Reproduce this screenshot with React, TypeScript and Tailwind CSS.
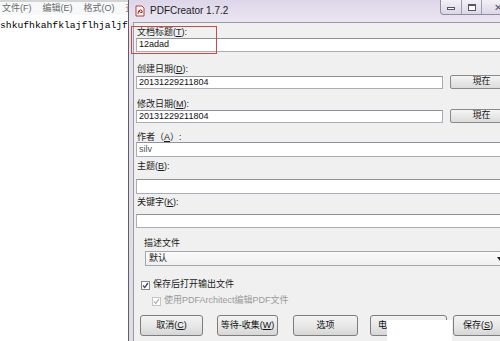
const cjk = "font-['Liberation_Sans','Noto_Sans_CJK_SC',sans-serif]";

function Label({ text, k, className = "" }: { text: string; k: string; className?: string }) {
  return (
    <div className={`h-[10px] whitespace-nowrap pl-[3px] text-[9px] leading-[10px] text-[#1a1a1a] ${className}`}>
      {text}(<u>{k}</u>):
    </div>
  );
}

function Input({ value, h, className = "" }: { value?: string; h: number; className?: string }) {
  return (
    <div
      className={`ml-[2px] flex items-center border border-[#a9adb5] border-t-[#8e939b] bg-white pl-[2px] text-[9px] text-[#111] ${className}`}
      style={{ height: h }}
    >
      {value}
    </div>
  );
}

function NowButton() {
  return (
    <div className="flex h-[14px] flex-1 items-center justify-center rounded-[2px] border border-[#8a8a8a] bg-gradient-to-b from-[#f4f4f4] to-[#dcdcdc] text-[9px] text-[#111]">
      現在
    </div>
  );
}

function Check({ label, disabled }: { label: React.ReactNode; disabled?: boolean }) {
  return (
    <div className={`flex h-[12px] items-center gap-[3px] whitespace-nowrap text-[9px] ${disabled ? "text-[#9a9a9a]" : "text-[#1a1a1a]"}`}>
      <div
        className={`flex h-[9px] w-[9px] items-center justify-center border bg-white ${
          disabled ? "border-[#c4c4c4]" : "border-[#8a8a8a]"
        }`}
      >
        <svg width="7" height="7" viewBox="0 0 7 7">
          <path d="M1 3.5 L2.8 5.5 L6 1" fill="none" stroke={disabled ? "#b5b5b5" : "#3b4a6b"} strokeWidth="1.3" />
        </svg>
      </div>
      {label}
    </div>
  );
}

function Btn({ children, w, className = "" }: { children: React.ReactNode; w: number; className?: string }) {
  return (
    <div
      className={`flex h-[21px] shrink-0 items-center justify-center whitespace-nowrap rounded-[3px] border border-[#7d7d7d] bg-gradient-to-b from-[#f3f3f3] via-[#e8e8e8] to-[#d6d6d6] text-[9px] text-[#111] ${className}`}
      style={{ width: w }}
    >
      {children}
    </div>
  );
}

export default function App() {
  return (
    <div className={`relative flex h-[341px] w-[500px] overflow-hidden bg-white ${cjk}`}>
      {/* notepad behind */}
      <div className="w-[128px] shrink-0 overflow-hidden">
        <div className="flex h-[15px] items-center gap-[11px] whitespace-nowrap border-t-2 border-[#d4d4d4] bg-[#f7f8f9] pl-[2px] text-[9px] text-[#6a6a6a]">
          <span>文件(F)</span>
          <span>编辑(E)</span>
          <span>格式(O)</span>
          <span>查看(V)</span>
        </div>
        <div className="mt-[5px] whitespace-nowrap font-['Liberation_Mono',monospace] text-[9.7px] leading-[12px] text-black">
          shkufhkahfklajflhjaljf
        </div>
      </div>

      {/* PDFCreator dialog */}
      <div className="flex w-[386px] shrink-0 flex-col border-l border-[#5e5d68]">
        <div className="flex h-[22px] shrink-0 items-start bg-gradient-to-b from-[#ddd6ea] to-[#ebe6f2]">
          <svg className="ml-[6px] mt-[5px]" width="10" height="12" viewBox="0 0 10 12">
            <path d="M1 1 H7 L9 3 V11 H1 Z" fill="#fff" stroke="#b23a3a" strokeWidth="1" />
            <path d="M3 9 C3 5 6 4 7 6 C8 8 5 8 4 6" fill="none" stroke="#c62828" strokeWidth="1.1" />
          </svg>
          <span className="ml-[5px] mt-[5px] whitespace-nowrap font-['Liberation_Sans',sans-serif] text-[10px] leading-[12px] text-[#1b1b1b]">
            PDFCreator 1.7.2
          </span>
          <div className="ml-auto flex h-[15px] rounded-b-[4px] border border-t-0 border-[#8f8da0] bg-gradient-to-b from-[#f3f0f7] to-[#dcd7e6]">
            <div className="flex w-[21px] items-center justify-center border-r border-[#9e9cae]">
              <div className="mt-[3px] h-[3px] w-[8px] border border-[#56566a] bg-white" />
            </div>
            <div className="flex w-[20px] items-center justify-center border-r border-[#9e9cae]">
              <div className="h-[7px] w-[8px] border border-t-2 border-[#56566a] bg-white" />
            </div>
            <div className="flex w-[31px] items-center justify-center text-[10px] text-[#56566a]">✕</div>
          </div>
        </div>

        <div className="flex flex-1">
          <div className="w-[4px] shrink-0 bg-gradient-to-b from-[#e7e3ee] to-[#dedbe4]" />
          <div className="flex flex-1 flex-col border-l border-t border-[#9c9aa6] bg-[#f0f0f0] pr-[5px]">
            <Label className="mt-[4px]" text="文档标题" k="T" />
            <Input className="mt-[1px]" value="12adad" h={14} />

            <Label className="mt-[12px]" text="创建日期" k="D" />
            <div className="mt-[1px] flex items-end gap-[7px]">
              <Input className="w-[307px]" value="20131229211804" h={13} />
              <NowButton />
            </div>

            <Label className="mt-[10px]" text="修改日期" k="M" />
            <div className="flex items-end gap-[7px]">
              <Input className="w-[307px]" value="20131229211804" h={13} />
              <NowButton />
            </div>

            <div className="mt-[9px] h-[10px] whitespace-nowrap pl-[3px] text-[9px] leading-[10px] text-[#1a1a1a]">
              作者（<u>A</u>）:
            </div>
            <Input className="text-[7px] text-[#555]" value="silv" h={15} />

            <Label className="mt-[4px]" text="主题" k="B" />
            <Input className="mt-[8px]" h={15} />

            <Label className="mt-[3px]" text="关键字" k="K" />
            <Input className="mt-[7px]" h={14} />

            <div className="ml-[10px] mt-[10px] h-[10px] text-[9px] leading-[10px] text-[#1a1a1a]">描述文件</div>
            <div className="relative ml-[11px] mr-[3px] mt-[3px] flex h-[15px] items-center border border-[#a3a6ad] bg-gradient-to-b from-[#fbfbfb] to-[#f0f0f0] pl-[3px] text-[9px] text-[#111]">
              默认
              <svg className="absolute right-[6px] top-[5px]" width="6" height="4" viewBox="0 0 6 4">
                <path d="M0 0 H6 L3 4 Z" fill="#222" />
              </svg>
            </div>

            <div className="ml-[7px] mt-[13px]">
              <Check label="保存后打开输出文件" />
            </div>
            <div className="ml-[18px] mt-[4px]">
              <Check disabled label="使用PDFArchitect编辑PDF文件" />
            </div>

            <div className="ml-[6px] mt-[8px] flex">
              <Btn w={63}>
                取消(<u>C</u>)
              </Btn>
              <Btn w={61} className="ml-[14px]">
                等待-收集(<u>W</u>)
              </Btn>
              <Btn w={65} className="ml-[15px]">
                选项
              </Btn>
              <Btn w={77} className="ml-[12px] justify-start pl-[7px]">
                电
              </Btn>
              <Btn
                w={60}
                className="ml-[6px] justify-start border-[#6f8aa8] from-[#eef3f8] via-[#dde7f0] to-[#c9dceb] pl-[9px]"
              >
                保存(<u>S</u>)
              </Btn>
            </div>
          </div>
        </div>
      </div>

      {/* annotation overlays */}
      <div className="absolute left-[131px] top-[26px] h-[28px] w-[86px] border border-[#c84a4a]" />
      <div className="absolute left-[387px] top-[320px] h-[21px] w-[65px] bg-white" />
    </div>
  );
}
